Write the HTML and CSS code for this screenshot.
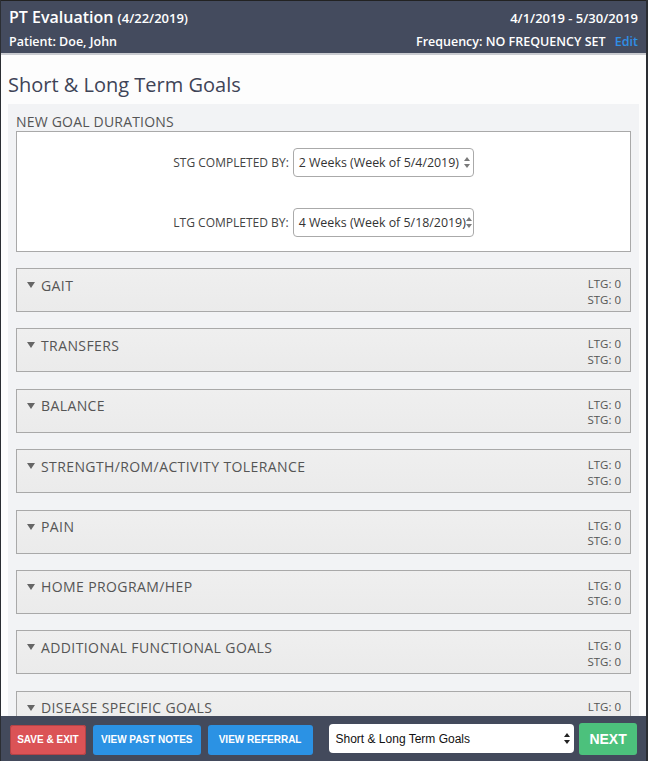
FILE: index.html
```html
<!DOCTYPE html>
<html>
<head>
<meta charset="utf-8">
<link rel="stylesheet" href="styles.css">
</head>
<body>
<div class="app">
  <header class="top">
    <div class="top-row">
      <div class="title">PT Evaluation <span class="title-date">(4/22/2019)</span></div>
      <div class="range">4/1/2019 - 5/30/2019</div>
    </div>
    <div class="top-row sub">
      <div>Patient: Doe, John</div>
      <div>Frequency: NO FREQUENCY SET <a class="edit">Edit</a></div>
    </div>
  </header>
  <main class="main">
    <h1 class="page-title">Short &amp; Long Term Goals</h1>
    <section class="panel">
      <div class="panel-label">NEW GOAL DURATIONS</div>
      <div class="durations">
        <div class="dur-row">
          <span class="dur-label">STG COMPLETED BY:</span>
          <div class="fake-select"><span>2 Weeks (Week of 5/4/2019)</span><svg class="arrows" width="6" height="11" viewBox="0 0 6 11"><path d="M3 0 L6 4 L0 4 Z M0 7 L6 7 L3 11 Z" fill="#7a7a7a"/></svg></div>
        </div>
        <div class="dur-row">
          <span class="dur-label">LTG COMPLETED BY:</span>
          <div class="fake-select"><span>4 Weeks (Week of 5/18/2019)</span><svg class="arrows" width="6" height="11" viewBox="0 0 6 11"><path d="M3 0 L6 4 L0 4 Z M0 7 L6 7 L3 11 Z" fill="#7a7a7a"/></svg></div>
        </div>
      </div>
      <div class="goals">
        <div class="goal"><div class="goal-name"><span class="caret"></span>GAIT</div><div class="counts">LTG: 0<br>STG: 0</div></div>
        <div class="goal"><div class="goal-name"><span class="caret"></span>TRANSFERS</div><div class="counts">LTG: 0<br>STG: 0</div></div>
        <div class="goal"><div class="goal-name"><span class="caret"></span>BALANCE</div><div class="counts">LTG: 0<br>STG: 0</div></div>
        <div class="goal"><div class="goal-name"><span class="caret"></span>STRENGTH/ROM/ACTIVITY TOLERANCE</div><div class="counts">LTG: 0<br>STG: 0</div></div>
        <div class="goal"><div class="goal-name"><span class="caret"></span>PAIN</div><div class="counts">LTG: 0<br>STG: 0</div></div>
        <div class="goal"><div class="goal-name"><span class="caret"></span>HOME PROGRAM/HEP</div><div class="counts">LTG: 0<br>STG: 0</div></div>
        <div class="goal"><div class="goal-name"><span class="caret"></span>ADDITIONAL FUNCTIONAL GOALS</div><div class="counts">LTG: 0<br>STG: 0</div></div>
        <div class="goal"><div class="goal-name"><span class="caret"></span>DISEASE SPECIFIC GOALS</div><div class="counts">LTG: 0<br>STG: 0</div></div>
      </div>
    </section>
  </main>
  <footer class="bottom">
    <button class="btn red">SAVE &amp; EXIT</button>
    <button class="btn blue past">VIEW PAST NOTES</button>
    <button class="btn blue ref">VIEW REFERRAL</button>
    <div class="nav-select"><span>Short &amp; Long Term Goals</span><svg class="arrows" width="6" height="11" viewBox="0 0 6 11"><path d="M3 0 L6 4 L0 4 Z M0 7 L6 7 L3 11 Z" fill="#222"/></svg></div>
    <button class="btn green">NEXT</button>
  </footer>
</div>
</body>
</html>
```
FILE: styles.css
```css
* { box-sizing: border-box; }
html, body { margin: 0; padding: 0; }
body {
  font-family: "Open Sans", "Noto Sans", sans-serif;
  background: #2b2e33;
  width: 648px;
  height: 761px;
  overflow: hidden;
}
.app {
  width: 646px;
  height: 761px;
  display: flex;
  flex-direction: column;
  background: #fdfdfd;
  border-left: 1px solid #2b2e33;
}
.top {
  background: #444b5e;
  color: #fff;
  border-top: 1px solid #222;
  border-bottom: 2px solid #c9cbd0;
  padding: 0 8px 0 8px;
  height: 55px;
  flex: none;
}
.top-row {
  display: flex;
  justify-content: space-between;
  align-items: baseline;
  height: 32px;
  padding-top: 5px;
}
.title {
  font-size: 16px;
  font-weight: 600;
}
.title-date {
  font-size: 13px;
}
.range {
  font-size: 13px;
  font-weight: 600;
}
.top-row.sub {
  font-size: 12.5px;
  font-weight: 600;
  height: 20px;
  padding-top: 0;
}
.sub .freq { font-size: 13px; }
.edit {
  color: #2f8fe6;
  margin-left: 6px;
}
.main {
  flex: 1;
  overflow: hidden;
  padding: 0 0 0 7px;
}
.page-title {
  margin: 0;
  font-size: 20px;
  font-weight: 400;
  color: #3f4457;
  height: 49px;
  line-height: 59px;
}
.panel {
  width: 631px;
  background: #f2f3f5;
  padding: 8px 8px 0 8px;
}
.panel-label {
  font-size: 14px;
  color: #555;
  line-height: 19px;
  letter-spacing: 0.2px;
}
.durations {
  background: #fff;
  border: 1px solid #a9a9a9;
  height: 121px;
  display: flex;
  flex-direction: column;
  align-items: center;
  padding-top: 16px;
  gap: 31px;
}
.dur-row {
  display: flex;
  align-items: center;
  gap: 4px;
}
.dur-label {
  font-size: 12px;
  color: #444;
}
.fake-select {
  width: 181px;
  height: 29px;
  border: 1px solid #aaa;
  border-radius: 4px;
  background: #fff;
  font-size: 12.4px;
  color: #333;
  display: flex;
  align-items: center;
  justify-content: space-between;
  padding: 0 3px 0 5px;
  white-space: nowrap;
}
.arrows { flex: none; }
.goals {
  display: flex;
  flex-direction: column;
  gap: 16.4px;
  padding-top: 16px;
}
.goal {
  height: 44px;
  border: 1px solid #a9a9a9;
  background: linear-gradient(#efefef, #ebebeb);
  display: flex;
  justify-content: space-between;
  padding: 5px 9px 0 10px;
}
.goal-name {
  font-size: 14px;
  color: #555;
  letter-spacing: 0.4px;
  display: flex;
  align-items: center;
  height: 22px;
}
.caret {
  width: 0;
  height: 0;
  border-left: 4.5px solid transparent;
  border-right: 4.5px solid transparent;
  border-top: 6px solid #666;
  margin-right: 6px;
}
.counts {
  font-size: 11.5px;
  color: #555;
  text-align: right;
  line-height: 15.5px;
  padding-top: 2px;
}
.bottom {
  flex: none;
  height: 45px;
  background: #434a5c;
  display: flex;
  align-items: center;
  padding: 0 9px 0 9px;
  gap: 7px;
}
.btn {
  font-family: "Liberation Sans", Arial, sans-serif;
  border: none;
  border-radius: 3px;
  color: #fff;
  font-size: 10px;
  font-weight: 700;
  height: 30px;
  padding: 0;
  margin-top: 2px;
}
.red { background: #db5356; width: 76px; box-shadow: 0 0 0 1px #b54346 inset; }
.blue { background: #2b92e4; }
.past { width: 108px; }
.ref { width: 105px; }
.nav-select {
  margin-left: 9px;
  width: 246px;
  height: 29px;
  background: #fff;
  border-radius: 4px;
  font-family: "Liberation Sans", Arial, sans-serif;
  font-size: 12px;
  color: #111;
  display: flex;
  align-items: center;
  justify-content: space-between;
  padding: 0 4px 0 7px;
}
.green {
  background: #4cc17c;
  width: 58px;
  height: 32px;
  font-size: 14px;
  margin-left: -2px;
  margin-top: 0;
}
```
